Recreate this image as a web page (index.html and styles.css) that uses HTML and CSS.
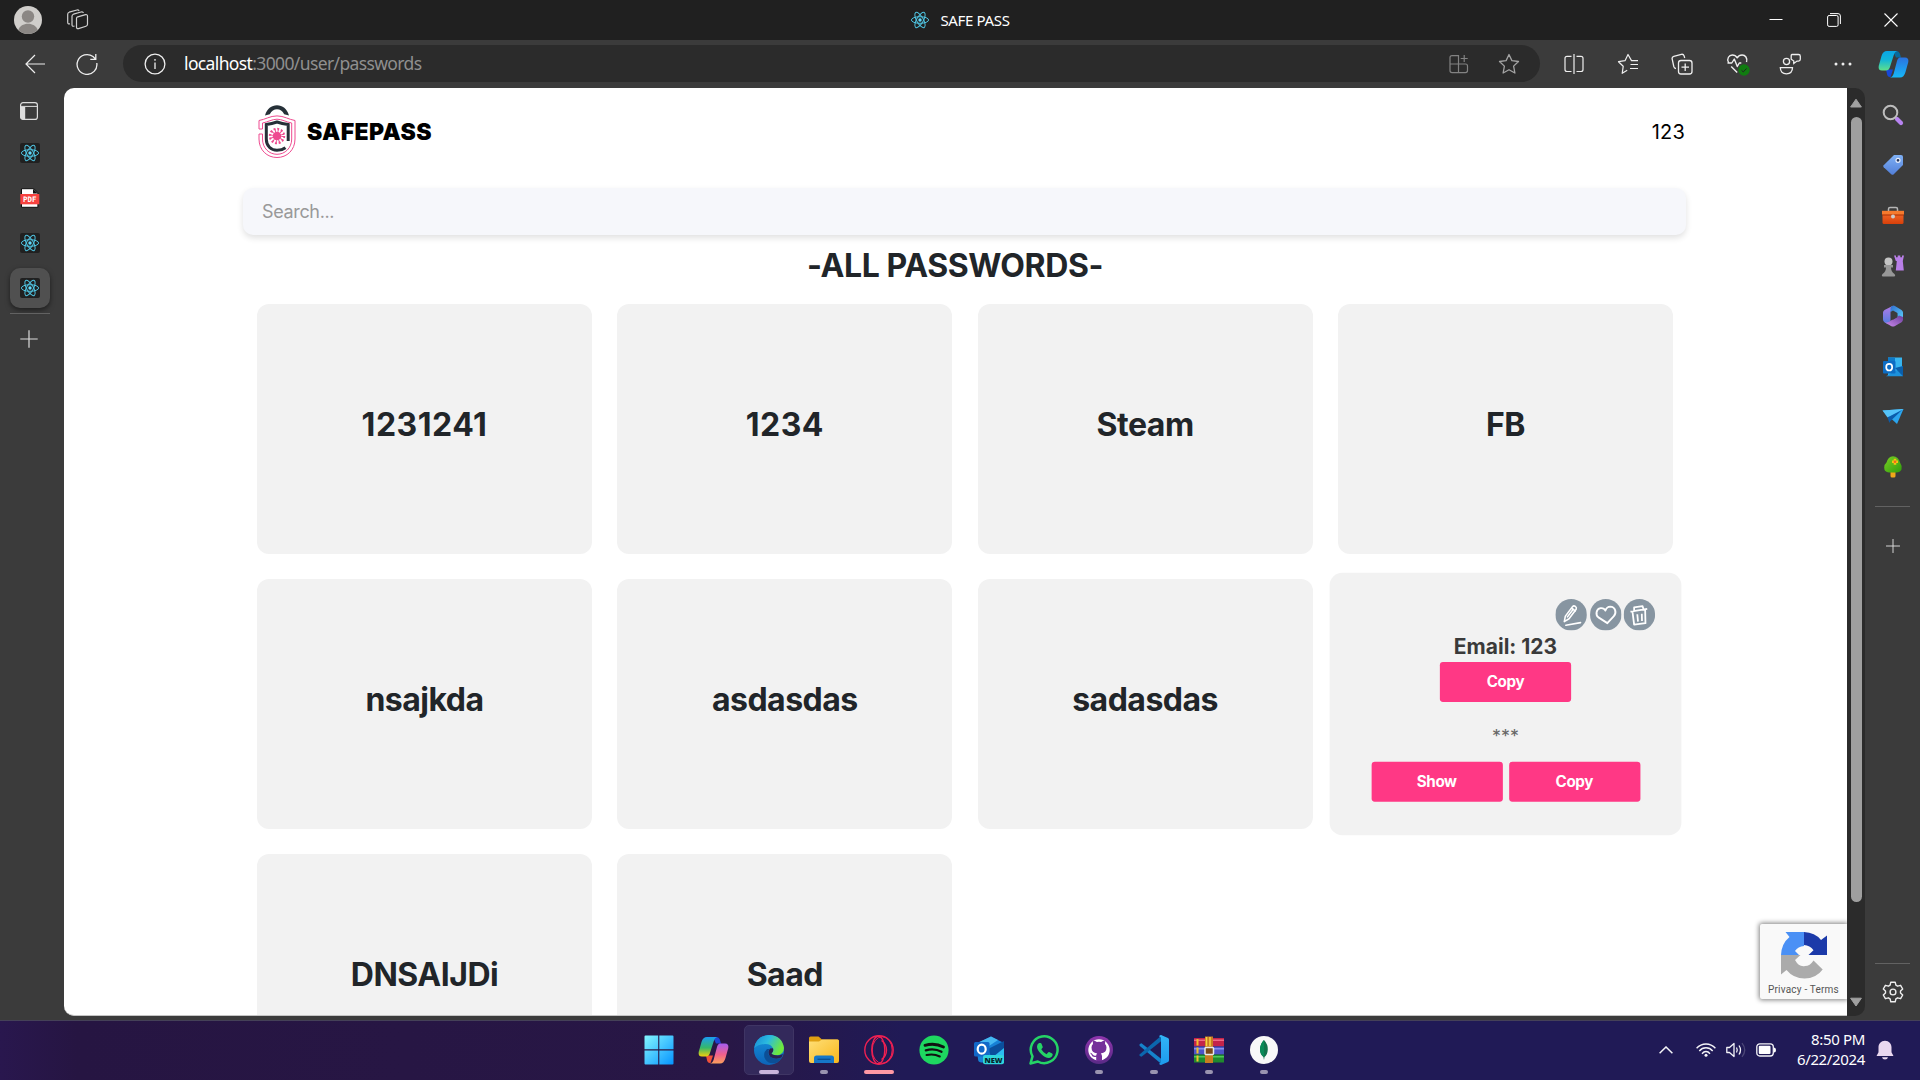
FILE: index.html
```html
<!DOCTYPE html>
<html lang="en">
<head>
<meta charset="utf-8">
<title>SAFE PASS</title>
<link rel="stylesheet" href="styles.css">
</head>
<body>
<svg class="defs" width="0" height="0" aria-hidden="true">
  <defs>
    <linearGradient id="g-win" x1="0" y1="0" x2="1" y2="1"><stop offset="0" stop-color="#84f6ff"/><stop offset="1" stop-color="#0594ff"/></linearGradient>
    <linearGradient id="g-cyan" x1="0" y1="0" x2="0" y2="1"><stop offset="0" stop-color="#0aa5e6"/><stop offset=".45" stop-color="#12b5d8"/><stop offset="1" stop-color="#5fe08a"/></linearGradient>
    <linearGradient id="g-blue" x1="0" y1="0" x2="0" y2="1"><stop offset="0" stop-color="#2b72e0"/><stop offset="1" stop-color="#16b8f8"/></linearGradient>
    <linearGradient id="g-rain" x1="0" y1="0" x2="0" y2="1"><stop offset="0" stop-color="#1b9cf2"/><stop offset=".55" stop-color="#35b86a"/><stop offset="1" stop-color="#f2d00c"/></linearGradient>
    <linearGradient id="g-pink" x1="0" y1="0" x2="0" y2="1"><stop offset="0" stop-color="#a45cf0"/><stop offset=".55" stop-color="#f0608c"/><stop offset="1" stop-color="#fba05c"/></linearGradient>
    <linearGradient id="g-edge" x1="0" y1="0" x2="1" y2=".4"><stop offset="0" stop-color="#1787d4"/><stop offset=".5" stop-color="#2bbbe0"/><stop offset="1" stop-color="#6fe83c"/></linearGradient>
    <linearGradient id="g-edge2" x1="0" y1="0" x2="0" y2="1"><stop offset="0" stop-color="#1594dc"/><stop offset="1" stop-color="#0d63b8"/></linearGradient>
    <linearGradient id="g-fold" x1="0" y1="0" x2="1" y2="1"><stop offset="0" stop-color="#ffdf77"/><stop offset="1" stop-color="#f8b71c"/></linearGradient>
    <linearGradient id="g-tag" x1="0" y1="0" x2="0" y2="1"><stop offset="0" stop-color="#7fb0f5"/><stop offset="1" stop-color="#527fd8"/></linearGradient>
    <linearGradient id="g-tree" x1="0" y1="0" x2="1" y2="1"><stop offset="0" stop-color="#7ad024"/><stop offset="1" stop-color="#2f9c0c"/></linearGradient>
    <linearGradient id="g-code" x1="0" y1="0" x2="0" y2="1"><stop offset="0" stop-color="#32b4f5"/><stop offset="1" stop-color="#1d9bee"/></linearGradient>
    <linearGradient id="g-box" x1="0" y1="0" x2="0" y2="1"><stop offset="0" stop-color="#f57030"/><stop offset="1" stop-color="#d8400a"/></linearGradient>
    <linearGradient id="g-git" x1="0" y1="0" x2="0" y2="1"><stop offset="0" stop-color="#8f35ad"/><stop offset="1" stop-color="#5a2a86"/></linearGradient>
    <linearGradient id="g-hex1" x1="0" y1="0" x2="0" y2="1"><stop offset="0" stop-color="#b57be8"/><stop offset="1" stop-color="#4f7de0"/></linearGradient>
    <linearGradient id="g-hex2" x1="0" y1="0" x2="1" y2="1"><stop offset="0" stop-color="#2f6fd0"/><stop offset="1" stop-color="#5cd0fa"/></linearGradient>
    <linearGradient id="g-hex3" x1="1" y1="0" x2="0" y2="1"><stop offset="0" stop-color="#6a3d9c"/><stop offset="1" stop-color="#cf8df0"/></linearGradient>
  </defs>
  <symbol id="react" viewBox="0 0 20 20">
    <g fill="none" stroke="#4fc3e0" stroke-width="1"><ellipse cx="10" cy="10" rx="8.6" ry="3.3"/><ellipse cx="10" cy="10" rx="8.6" ry="3.3" transform="rotate(60 10 10)"/><ellipse cx="10" cy="10" rx="8.6" ry="3.3" transform="rotate(120 10 10)"/></g><circle cx="10" cy="10" r="1.7" fill="#61dafb"/>
  </symbol>
  <symbol id="plus" viewBox="0 0 20 20"><path d="M10 1.3v17.4M1.3 10h17.4" stroke="#dcdcdc" stroke-width="1.2"/></symbol>
</svg>

<header class="titlebar">
  <div class="title-left">
    <svg width="28" height="28" viewBox="0 0 28 28"><circle cx="14" cy="14" r="14" fill="#d0cecb"/><circle cx="14" cy="10.500" r="6.200" fill="#8b8784"/><path d="M4.300 24c1.500-4.200 5.200-6.300 9.700-6.300s8.200 2.100 9.700 6.300A14 14 0 0 1 14 28a14 14 0 0 1-9.700-4z" fill="#8b8784"/></svg>
    <svg width="22" height="22" viewBox="0 0 22 22" fill="none" stroke="#cfcfcf" stroke-width="1.200" stroke-linejoin="round"><path d="M10 8.200l8.500-2.500q2-.4 2 1.500v8q0 1.500-1.500 2L11.500 19.600q-2 .5-2-1.500V9.500q0-1 .5-1.300z"/><path d="M7.500 17Q5 17.800 5 16V7.200q0-1.500 1.500-2L14 3q2-.5 2.300 1"/><path d="M3 14.800q-2.300.7-2.300-1.500V5.200q0-1.500 1.500-2L10 1q1.700-.4 2 1"/></svg>
  </div>
  <div class="title-mid"><svg width="20" height="20"><use href="#react"/></svg><span>SAFE PASS</span></div>
  <div class="win-btns">
    <span><svg width="14" height="14" viewBox="0 0 14 14"><path d="M.5 6.500h13" stroke="#fff"/></svg></span>
    <span><svg width="14" height="14" viewBox="0 0 14 14" fill="none" stroke="#fff"><rect x=".6" y="2.500" width="10.500" height="10.900" rx="1.500"/><path d="M3 .6h8q2.400 0 2.400 2.400v8"/></svg></span>
    <span><svg width="14" height="14" viewBox="0 0 14 14"><path d="M.5.5l13 13M13.500.5l-13 13" stroke="#fff" stroke-width="1.100"/></svg></span>
  </div>
</header>

<nav class="toolbar">
  <span class="nav-btn back"><svg width="20" height="20" viewBox="0 0 20 20" fill="none" stroke="#eee" stroke-width="1.200"><path d="M20 10H.8M10 1L1 10l9 9"/></svg></span>
  <span class="nav-btn reload"><svg width="22" height="22" viewBox="0 0 22 22" fill="none" stroke="#eee" stroke-width="1.300"><path d="M20.800 10A9.900 9.900 0 1 1 17 3.600L19.500 6M19.800 1v5.400h-5.500"/></svg></span>
  <div class="address">
    <svg class="info" width="22" height="22" viewBox="0 0 22 22" fill="none" stroke="#eee" stroke-width="1.300"><circle cx="11" cy="11" r="9.900"/><path d="M11 9.500v6.500M11 6v1.700"/></svg>
    <span class="url"><b>localhost</b>:3000/user/passwords</span>
    <svg width="20" height="20" viewBox="0 0 20 20" fill="none" stroke="#828282" stroke-width="1.200"><path d="M9.500 18.700V1.600H3Q1 1.600 1 3.600v13q0 2 2 2h13.500q2 0 2-2V12q0-2-2-2H1M15.200 1v7M11.700 4.500h7"/></svg>
    <svg class="star" width="22" height="22" viewBox="0 0 22 22" fill="none" stroke="#a4a4a4" stroke-width="1.300" stroke-linejoin="round"><path d="M11 1.500l2.900 6.100 6.600.9-4.900 4.600 1.300 6.900-5.900-3.300-5.900 3.300 1.300-6.900L1.500 8.500l6.600-.9z"/></svg>
  </div>
  <div class="tools">
    <span><svg width="20" height="20" viewBox="0 0 20 20" fill="none" stroke="#eee" stroke-width="1.200"><path d="M10 0v20M7.500 2.300H3Q1 2.300 1 4.300v11.200q0 2 2 2h4.500M12.500 2.300H17q2 0 2 2v11.200q0 2-2 2h-4.500"/></svg></span>
    <span><svg width="22" height="22" viewBox="0 0 22 22" fill="none" stroke="#eee" stroke-width="1.200" stroke-linejoin="round"><path d="M21 7.600h-6.500L11 1.500 8 7.700l-6.500 1 4.700 4.600-1 7 5-3M13.500 11.500H21M13 15.500h8"/></svg></span>
    <span><svg width="22" height="22" viewBox="0 0 22 22" fill="none" stroke="#eee" stroke-width="1.300"><rect x="7.500" y="7.500" width="13.500" height="13.500" rx="2.500"/><path d="M14.200 10.500v7.500M10.500 14.200H18M5 15.500q-1.700 0-2.200-2L1.200 6.200Q.7 4 2.800 3.300l7.500-2q2.200-.4 2.800 1.600l.6 2.100"/></svg></span>
    <span class="health"><svg width="24" height="24" viewBox="0 0 24 24" fill="none" stroke="#eee" stroke-width="1.400" stroke-linejoin="round"><path d="M2.500 10.500C.5 6.500 3 3 6.300 3c2.500 0 4 1.400 4.900 2.800C12.100 4.400 13.600 3 16.100 3c3.300 0 5.500 3 4.400 7M1.500 11h4.300l2.500-4 3 7.500 2-3.500h2M5.200 14.500l6 6"/><circle cx="18" cy="18" r="5.700" fill="#107c10" stroke="none"/><path d="M15.500 18.300l1.800 1.600 3.200-3.400" stroke="#222" stroke-width="1"/></svg></span>
    <span><svg width="22" height="22" viewBox="0 0 22 22" fill="none" stroke="#eee" stroke-width="1.300"><circle cx="7.500" cy="8.500" r="3.100"/><path d="M1.300 14.600H13.500c0 4-2.300 6.200-6.100 6.200s-6.100-2.200-6.100-6.200zM13 1.500h6.500q1.800 0 1.800 1.800v3q0 1.800-1.800 1.800h-1.500L14.800 10.500V8l-2.600-1.800V3q0-1.500.8-1.500z"/></svg></span>
    <span class="more"><svg width="18" height="4" viewBox="0 0 18 4" fill="#eee"><circle cx="2" cy="2" r="1.500"/><circle cx="9" cy="2" r="1.500"/><circle cx="16" cy="2" r="1.500"/></svg></span>
    <span class="copilot"><svg width="31" height="28" viewBox="0 0 31 28"><path d="M15 1h3.500q2.500 0 3.400 2.700L23 7.500h-5z" fill="#076a9c"/><path d="M8 19.500h7L12.500 27q-2.500.4-3.300-2z" fill="#1648d8"/><path d="M9 1h11q-3 0-4.200 4l-4 12.500q-1 3-3.800 3H4Q0 20.500.7 16L3.500 6Q5 1 9 1z" fill="url(#g-cyan)"/><path d="M22 7.500h5q4 0 3.300 4.500l-2.800 10Q26 27.500 22 27.500H11.500q3-.2 4.200-4L19 11q1-3.500 3-3.500z" fill="url(#g-blue)"/></svg></span>
  </div>
</nav>

<div class="workspace">
  <aside class="tabs">
    <span class="tab tab-menu"><svg width="18" height="18" viewBox="0 0 18 18"><rect x=".6" y=".6" width="16.800" height="16.800" rx="2.500" fill="none" stroke="#ddd" stroke-width="1.200"/><path d="M.5 5h4.700v12.500H2.500Q.5 17.500.5 15.500z" fill="#ddd"/><path d="M1 4.400h16" stroke="#ddd"/></svg></span>
    <span class="tab"><i class="fav"><svg width="20" height="20"><use href="#react"/></svg></i></span>
    <span class="tab"><svg class="pdf" width="20" height="20" viewBox="0 0 20 20"><path d="M1.500.7h12.300l4.100 4v14.600H1.500z" fill="#fff" stroke="#111"/><path d="M13 .7v4.800h5z" fill="#111"/><rect x=".3" y="6" width="19" height="10.300" fill="#f8423f"/><text x="9.800" y="13.900" text-anchor="middle" class="pdf-text">PDF</text></svg></span>
    <span class="tab"><i class="fav"><svg width="20" height="20"><use href="#react"/></svg></i></span>
    <span class="tab active"><i class="fav"><svg width="20" height="20"><use href="#react"/></svg></i></span>
    <hr>
    <svg class="add" width="20" height="20"><use href="#plus"/></svg>
  </aside>

  <main class="page">
    <div class="content">
      <header class="site-head">
        <div class="brand">
          <svg width="38" height="54" viewBox="0 0 38 54" fill="none"><path d="M7 10.500C9 3.500 13.500.2 19 .2S29 3.500 31 10.500L26.200 9.200C24.500 6 22 4.300 19 4.300S13.500 6 11.800 9.200z" fill="#263038"/><g stroke="#ee4b90" stroke-width="1"><path d="M1 24V15.500C7 14.600 12 10.900 19 10.900S31 14.600 37 15.500V34C37 45 29 52.500 19 52.500S1 45 1 34V29H4.500V34C4.500 43 11 49.300 19 49.300S33.700 43 33.700 34V18C28 17 24 14.200 19 14.200S10 17 4.500 18V24z"/></g><path d="M30.200 36V19.500Q24 18.700 19 17Q14 18.700 8.300 19.500V34C8.300 41 13 45.300 19 45.300Q24 45.300 27.500 42.700" stroke="#263038" stroke-width="3"/><g stroke="#ee4b90"><circle cx="19" cy="31" r="4.300" fill="#ee4b90" stroke="none"/><circle cx="19" cy="31" r="5.800" stroke-width="3.200" stroke-dasharray="1.100 1.937"/><circle cx="19" cy="31" r="7.300" stroke-width="1.800" stroke-dasharray="2 1.822"/></g></svg>
          <span>SAFEPASS</span>
        </div>
        <span class="user">123</span>
      </header>
      <div class="search">Search...</div>
      <h2>-ALL PASSWORDS-</h2>
      <section class="grid">
        <article class="card numeric">1231241</article>
        <article class="card numeric">1234</article>
        <article class="card">Steam</article>
        <article class="card">FB</article>
        <article class="card">nsajkda</article>
        <article class="card">asdasdas</article>
        <article class="card">sadasdas</article>
        <article class="card open">
          <div class="actions">
            <svg width="30" height="30" viewBox="0 0 30 30" fill="none" stroke="#fff" stroke-width="1.500" stroke-linejoin="round"><circle cx="15" cy="15" r="15" fill="#8795a1" stroke="none"/><path d="M8.500 21.500l1-5.200 6.800-9q1.200-1.300 2.700-.2t.8 2.700l-6.800 9zM16 9l3 2.500M11.500 17l5.500-7.300M10 25l14-2.500" stroke-linecap="round"/></svg>
            <svg width="30" height="30" viewBox="0 0 30 30" fill="none" stroke="#fff" stroke-width="1.800" stroke-linejoin="round"><circle cx="15" cy="15" r="15" fill="#8795a1" stroke="none"/><path d="M16.500 23L8 17.500C5 15 5.700 9.500 10 8.700q3.300-.4 4.700 2.300Q16 7.300 19.200 7.300c5.300.2 6.200 6.200 3.500 9z"/></svg>
            <svg width="30" height="30" viewBox="0 0 30 30" fill="none" stroke="#fff" stroke-width="1.700" stroke-linejoin="round"><circle cx="15" cy="15" r="15" fill="#8795a1" stroke="none"/><path d="M6.500 12L22.500 9.500M10 11.300V8L18 6.700 19 10M8.500 12.500l1.500 12L20.800 23 20.500 10.500M13 14.500l.7 7M17.300 14l.2 7"/></svg>
          </div>
          <h3>Email: 123</h3>
          <button class="pink">Copy</button>
          <p>***</p>
          <div class="pair"><button class="pink">Show</button><button class="pink">Copy</button></div>
        </article>
        <article class="card">DNSAIJDi</article>
        <article class="card">Saad</article>
      </section>
    </div>
    <div class="captcha">
      <svg width="48" height="48" viewBox="0 0 48 48"><path d="M24 1v14q-6 .5-9 5l4 4H1Q1.500 12.500 9.500 6L5.500 1z" fill="#4a90f5"/><path d="M24 1q11 .4 17 8l6-4.500V24H28.500l5-4.800Q30 14.500 24 14z" fill="#1c3aa9"/><path d="M1 24h19.500l-5.500 5q4 7.300 10 6 5 0 8.500-5.500l9.200 9Q36 47.500 24.500 47.500 13.500 47.500 6.500 39L1 43.500z" fill="#ababab"/></svg>
      <span>Privacy - Terms</span>
    </div>
  </main>
  <div class="scroll">
    <svg width="14" height="10" viewBox="0 0 14 10"><path d="M7 1.200L12.400 9H1.600z" fill="#a0a0a0" stroke="#a0a0a0" stroke-linejoin="round"/></svg>
    <div class="thumb"></div>
    <svg width="14" height="10" viewBox="0 0 14 10"><path d="M7 9L12.400 1.200H1.600z" fill="#a0a0a0" stroke="#a0a0a0" stroke-linejoin="round"/></svg>
  </div>

  <aside class="apps">
    <span><svg width="22" height="22" viewBox="0 0 22 22"><path d="M15 15l4 4" stroke="#b884f2" stroke-width="4.200" stroke-linecap="round"/><circle cx="8.500" cy="8.500" r="6.800" fill="none" stroke="#bdbdbd" stroke-width="2"/></svg></span>
    <span><svg width="22" height="22" viewBox="0 0 22 22"><path d="M12 1h7q2 0 2 2v8L11.500 20.400q-1 .8-2 0l-7.800-7.200q-1-1 0-2z" fill="url(#g-tag)"/><circle cx="16" cy="6.300" r="2" fill="#25365c" stroke="#e8eefc" stroke-width="1.200"/></svg></span>
    <span><svg width="24" height="20" viewBox="0 0 24 20"><path d="M7.500 5V3q0-1.500 1.500-1.500h6q1.500 0 1.500 1.500v2" fill="none" stroke="#b5b5b5" stroke-width="1.500"/><rect x="1.500" y="5" width="21" height="13" rx="1.500" fill="url(#g-box)"/><path d="M1 4.800h22v4H1z" fill="#f57a2e"/><path d="M1 9h22" stroke="#aa3004"/><circle cx="12" cy="10.500" r="2" fill="#ccc"/></svg></span>
    <span><svg width="24" height="24" viewBox="0 0 24 24"><path d="M13 1.500h2v1.700h1.700V1.500h2.600v1.700H21V1.500h2L21.800 7l1 9.500h-8l1-9.500h-1z" fill="#b97fe8"/><circle cx="7.500" cy="7.500" r="4" fill="#c4c4c4"/><path d="M3 11h9v2.500h-2q0 4 3.500 6.500 1.500 2.500-.5 2.500H2Q0 22.500 1.500 20 5 17.500 5 13.500H3z" fill="#979797"/></svg></span>
    <span><svg width="22" height="24" viewBox="0 0 22 24"><path d="M11.500 1.500L2.500 6Q1 7 1 8.500v7q0 1.800 1.500 2.700L6 20.300l2.500-3.500V8z" fill="url(#g-hex1)"/><path d="M8.500 8V4.500Q8.800 1 12.500 1.800L19.500 6Q21 7 21 8.500v7L15.500 13V9L11 6.500z" fill="url(#g-hex2)"/><path d="M21 13v2.500q0 1.800-1.500 2.700L13 22q-2 1-4 0l-6.500-3.800q3.500 1 6-1.400l7-4L17 11.500z" fill="url(#g-hex3)"/><path d="M11.500 8.300l3.700 2.200v2.800L11 15.700l-2-1.200V9.800z" fill="#3b3b3b"/></svg></span>
    <span><svg width="22" height="22" viewBox="0 0 22 22"><path d="M6 1.500h14v18H6z" fill="#36b5f0"/><path d="M6 1.500h7v6H6z" fill="#0e79c8"/><path d="M21 10v10.300H4L15 14z" fill="#1c91dc"/><path d="M13 12l8 8.300V10z" fill="#0a5eaa"/><rect x="1" y="5" width="12.500" height="12.500" rx="1" fill="#0d6dc4"/><ellipse cx="7.200" cy="11.200" rx="3" ry="3.300" fill="none" stroke="#fff" stroke-width="1.700"/></svg></span>
    <span><svg width="22" height="18" viewBox="0 0 22 18"><path d="M.5 2.500L21.500 1 15 16z" fill="#2ba5ee"/><path d="M.5 2.500L21.500 1 5.500 9.500z" fill="#55c4fa"/><path d="M5.500 9.500L20 2 8 13.500 7.500 15z" fill="#0c5cab"/></svg></span>
    <span><svg width="20" height="24" viewBox="0 0 20 24"><path d="M7.500 16h5v5q0 1.500-1.500 1.500H9q-1.500 0-1.500-1.500z" fill="#f0a81a"/><path d="M10 1.200q5.500.5 7 6.300 2.500 3.500 1.500 7Q17 18 12 17.500H6Q1.200 17.200 1.200 12.500q.3-3.500 2.300-5Q5 1.500 10 1.200z" fill="url(#g-tree)"/><path d="M12 3.700v6M9 6.700h6" stroke="#f5c211" stroke-width="2.600"/><circle cx="12" cy="6.700" r="1.300" fill="#f0641e"/></svg></span>
    <hr>
    <svg class="app-add" width="16" height="16"><use href="#plus"/></svg>
    <hr class="low">
    <svg class="gear" width="22" height="22" viewBox="0 0 22 22" fill="none" stroke="#eee" stroke-width="1.400" stroke-linejoin="round"><circle cx="11" cy="11" r="2.900"/><path d="M8.800 1.200h4.400l.7 3 1.700 1 3-.9 2.100 3.700-2.200 2.100v1.800l2.200 2.100-2.100 3.700-3-.9-1.700 1-.7 3H8.800l-.7-3-1.700-1-3 .9L1.300 14l2.200-2.100v-1.800L1.300 8l2.100-3.700 3 .9 1.700-1z"/></svg>
  </aside>
</div>

<footer class="taskbar">
  <div class="dock">
    <span><svg width="30" height="30" viewBox="0 0 30 30"><path d="M1.500.5h12.700v13.700H.5V1.500q0-1 1-1zM15.300.5h13.200q1 0 1 1v12.700H15.300zM.5 15.600h13.700v13.900H1.500q-1 0-1-1zM15.300 15.600h14.200v12.900q0 1-1 1H15.300z" fill="url(#g-win)"/></svg></span>
    <span><svg width="31" height="28" viewBox="0 0 31 28"><path d="M15 1h3.500q2.500 0 3.400 2.700L23 7.500h-5z" fill="#1d46d4"/><path d="M8 19.500h7L12.500 27q-2.500.4-3.300-2z" fill="#f0503a"/><path d="M9 1h11q-3 0-4.200 4l-4 12.500q-1 3-3.800 3H4Q0 20.500.7 16L3.500 6Q5 1 9 1z" fill="url(#g-rain)"/><path d="M22 7.500h5q4 0 3.300 4.500l-2.800 10Q26 27.500 22 27.500H11.500q3-.2 4.200-4L19 11q1-3.500 3-3.500z" fill="url(#g-pink)"/></svg></span>
    <span class="current"><svg width="30" height="30" viewBox="0 0 30 30"><circle cx="15" cy="15" r="15" fill="url(#g-edge2)"/><path d="M13 14q-5 5-1.500 10.500Q15 29.500 22 28q4-2 5.500-5.500-6 3-11-.5-4.500-4-1-8z" fill="#0c4f96"/><path d="M.3 13Q2 1.500 14 0q14-.3 16 13-.2 7-7.500 7.300-5 .2-5-2 2.500-2 1.500-5-2-4.500-8-4.300Q4 9.500.3 13z" fill="url(#g-edge)"/><path d="M17.500 18.300q2.500-2 1.500-5l-3 .3q-3.300 4.400.5 8.400 5 3 11 .5l1.500-3.500q-3 1.800-7 1.300-4-.3-4.500-2z" fill="#2a2150"/></svg><i class="bar mauve"></i></span>
    <span><svg width="30" height="28" viewBox="0 0 30 28"><path d="M0 2q0-1.500 1.500-1.500h8L13 3.500h15.500Q30 3.500 30 5v6H0z" fill="#e0a012"/><path d="M0 5.500h10L13 3.500h15.500Q30 3.500 30 5v20q0 2-2 2H2q-2 0-2-2z" fill="url(#g-fold)"/><path d="M5 27v-5q0-2.500 2.500-2.500h15q2.500 0 2.500 2.500v5z" fill="#1677c8"/><path d="M8.500 23.300h13" stroke="#0b4f91" stroke-width="1.300"/></svg><i class="bar dot"></i></span>
    <span><svg width="30" height="30" viewBox="0 0 30 30" fill="none" stroke="#f02052" stroke-width="1.400"><circle cx="15" cy="15" r="14.200"/><ellipse cx="14.300" cy="15" rx="6.500" ry="13.800"/><path d="M17.500 5.500q5 3.500 5 9.500t-5 9.500"/><ellipse cx="18.200" cy="15" rx="10" ry="13.300" stroke-width="1"/></svg><i class="bar rose"></i></span>
    <span><svg width="30" height="30" viewBox="0 0 30 30" fill="none" stroke="#111" stroke-linecap="round"><circle cx="15" cy="15" r="14.600" fill="#1ed760" stroke="none"/><path d="M6 10.300q10-2.800 18.500 1.700" stroke-width="2.800"/><path d="M6.800 15.300q8.700-2.300 15.700 1.500" stroke-width="2.300"/><path d="M7.500 20q7.300-1.700 13.300 1.500" stroke-width="2"/></svg></span>
    <span><svg width="30" height="30" viewBox="0 0 30 30"><path d="M2 9L17 1.500 30 8v18q0 1.500-1.500 1.500H7Q4 27 4 24z" fill="#1681d6"/><path d="M3 8L17 1.500l7 3.500-12 8z" fill="#45b8f2"/><path d="M14 14L30 6v10L18 24z" fill="#0a4f9c"/><path d="M30 13v13H14z" fill="#2cbdf0"/><rect x="0" y="7" width="15.500" height="14.500" rx="1.500" fill="#1268c8"/><ellipse cx="7.700" cy="14.200" rx="4" ry="4.500" fill="none" stroke="#fff" stroke-width="2.200"/><rect x="9" y="20" width="21" height="9.300" rx="2" fill="#2fd5dc"/><text x="19.500" y="27.500" text-anchor="middle" class="new-text">NEW</text></svg></span>
    <span><svg width="30" height="30" viewBox="0 0 30 30"><path d="M1.500 28.500l2-7.200A13.400 13.400 0 1 1 8.800 26.500z" fill="none" stroke="#25d366" stroke-width="2.500" stroke-linejoin="round"/><path d="M10 8h1.500q.7 0 1 .8l1.200 3q.2.6-.2 1l-1.200 1.500q2 3.600 5.200 4.900l1.600-1.800q.5-.5 1-.3l3 1.500q.7.400.6 1-.3 3-3.500 3.400-4 .2-8-4-4.300-4.300-4.200-7.500Q8 9 10 8z" fill="#25d366"/></svg></span>
    <span><svg width="30" height="30" viewBox="0 0 30 30"><circle cx="15" cy="15" r="14" fill="url(#g-git)"/><circle cx="15" cy="15" r="10.700" fill="#fff"/><path d="M12.200 26v-4.200q-3.800.8-4.700-2-.7-1.300-1.800-2 2-.2 3.200 2 1.300 1.500 3.300.8.200-1.300 1-2-5.700-.7-5.700-6 0-2.200 1.500-3.600-.5-1.700.3-3.500 1.800 0 3.600 1.500 2.100-.6 4.200 0 1.800-1.500 3.600-1.500.8 1.800.3 3.500 1.500 1.400 1.500 3.600 0 5.300-5.700 6 1.200 1 1.200 2.700V26z" fill="#74309a"/></svg><i class="bar dot"></i></span>
    <span><svg width="30" height="30" viewBox="0 0 30 30"><path d="M2.500 8.300L23 24.500v5L.8 11q-.8-1 0-1.900z" fill="#1583cc"/><path d="M2.500 21.700L23 5.500V0L.8 19.200q-.8 1 0 1.800z" fill="#0b66ad"/><path d="M22 0l7 3q1 .5 1 1.700v20.600q0 1.200-1 1.700l-7 3q-1 0-2-1.200l2-1.300v-25L20 1.200Q21 0 22 0z" fill="url(#g-code)"/></svg><i class="bar dot"></i></span>
    <span><svg width="30" height="28" viewBox="0 0 30 28"><rect y="2" width="30" height="8.300" fill="#c4244a"/><rect y="3.500" width="30" height="1.500" fill="#ef6a86"/><rect y="10.500" width="30" height="8" fill="#4c54c8"/><rect y="12" width="30" height="1.500" fill="#8690ee"/><rect y="18.500" width="30" height="8" fill="#1f8a2e"/><rect y="20" width="30" height="1.500" fill="#4fc85a"/><path d="M3.500 3v6.500M3.500 11.500v6M3.500 19.500v6" stroke="#f0c02c" stroke-width="2"/><rect x="11" y=".5" width="8" height="26.500" fill="#c97c22"/><path d="M12.500 1v9M16 1v9" stroke="#f4d442" stroke-width="1.500"/><rect x="11" y="11.500" width="8.500" height="7" rx="1" fill="#7a4818" stroke="#e8e8e8" stroke-width="1.500"/></svg><i class="bar dot"></i></span>
    <span><svg width="30" height="30" viewBox="0 0 30 30"><circle cx="15" cy="15" r="14" fill="#f8f8f8"/><path d="M15 5q4 4.300 3.800 9.500Q18.500 20 15.500 22L15 25l-.6-3Q11 19.500 11 14.500 11 9 15 5z" fill="#12734b"/><path d="M15 5v17q-3.800-3-4-7.500Q11 9 15 5z" fill="#0a8a58"/></svg><i class="bar dot"></i></span>
  </div>
  <div class="tray">
    <svg class="chev" width="14" height="8" viewBox="0 0 14 8" fill="none" stroke="#f4f4f8" stroke-width="1.500"><path d="M.6 7.300L7 1l6.400 6.300"/></svg>
    <svg class="wifi" width="20" height="16" viewBox="0 0 20 16" fill="none" stroke="#f4f4f8" stroke-width="1.400"><path d="M.6 6.300Q4.500 2 10 2t9.400 4.300M3.300 9Q6 5.800 10 5.800T16.700 9M6 11.700Q7.800 9.500 10 9.500t4 2.200"/><circle cx="10" cy="13.300" r="1.500" fill="#f4f4f8" stroke="none"/></svg>
    <svg class="vol" width="20" height="16" viewBox="0 0 20 16" fill="none" stroke="#f4f4f8" stroke-width="1.300" stroke-linejoin="round"><path d="M.8 5.500h2.700L8 1.500v13l-4.500-4H.8zM10.500 5.500q1.500 2.500 0 5M13 3.500q3 4.500 0 9"/><path d="M16 1.200q5.500 6.800 0 13.600" stroke="#4c4777"/></svg>
    <svg class="batt" width="20" height="14" viewBox="0 0 20 14"><rect x=".8" y=".8" width="16.500" height="12.200" rx="3" fill="none" stroke="#f4f4f8" stroke-width="1.300"/><rect x="2.800" y="2.800" width="11.700" height="8.200" rx="1" fill="#fff"/><path d="M18 4.500q2 0 2 2.500t-2 2.500z" fill="#fff"/></svg>
    <div class="clock"><span>8:50 PM</span><span>6/22/2024</span></div>
    <svg class="bell" width="18" height="20" viewBox="0 0 18 20"><path d="M9 .8c4 0 6.500 3 6.500 6.500v5L17.500 16H.5l2-3.700v-5C2.500 3.800 5 .8 9 .8z" fill="#ead8f0"/><path d="M6 17.200h6Q11.500 19.500 9 19.500T6 17.200z" fill="#ead8f0"/></svg>
  </div>
</footer>
</body>
</html>
```
FILE: styles.css
```css
* { box-sizing: border-box; }
body {
  margin: 0;
  width: 1920px;
  height: 1080px;
  overflow: hidden;
  display: flex;
  flex-direction: column;
  background: #3b3b3b;
  font-family: Inter, "Liberation Sans", sans-serif;
}
svg { display: block; flex: none; }
.defs { position: absolute; }
hr { border: 0; margin: 0; height: 1px; background: #626262; flex: none; }

.titlebar {
  height: 40px;
  flex: none;
  background: #202020;
  display: grid;
  grid-template-columns: 1fr auto 1fr;
  align-items: center;
}
.title-left { display: flex; align-items: center; gap: 25px; padding-left: 14px; }
.title-mid {
  display: flex;
  align-items: center;
  gap: 10px;
  color: #fff;
  font: 15px "Noto Sans", sans-serif;
  letter-spacing: -.35px;
}
.win-btns { display: flex; justify-content: flex-end; }
.win-btns span { width: 57.5px; height: 40px; display: grid; place-items: center; }

.toolbar { height: 48px; flex: none; display: flex; align-items: center; padding-bottom: 1px; }
.nav-btn { display: grid; place-items: center; width: 52px; }
.back { margin-left: 9px; }
.address {
  margin-left: 10px;
  width: 1417px;
  height: 37px;
  border-radius: 19px;
  background: #2b2b2b;
  display: flex;
  align-items: center;
  padding: 0 20px 0 21px;
}
.url { flex: 1; margin-left: 18px; padding-bottom: 2px; color: #8f8f8f; font: 17.500px/24px "Noto Sans", sans-serif; letter-spacing: -.63px; }
.url b { color: #fff; font-weight: 400; }
.star { margin-left: 29px; }
.tools { display: flex; align-items: center; margin-left: 7px; }
.tools span { width: 54px; display: grid; place-items: center; }
.tools .health { padding-left: 3px; }
.tools .more { padding-right: 3px; }
.tools .copilot { width: 45px; }

.workspace { height: 932px; flex: none; display: flex; align-items: flex-start; }
.tabs { width: 64px; display: flex; flex-direction: column; align-items: flex-start; }
.tab { width: 40px; height: 40px; margin: 0 0 5px 10px; display: grid; place-items: center; border-radius: 10px; }
.tab-menu { height: 45px; margin-bottom: 0; padding-right: 3px; }
.active { background: #505050; box-shadow: 0 2px 5px rgba(0,0,0,.5); }
.fav { background: #202020; border-radius: 2px; width: 20px; height: 20px; }
.pdf-text { font: 800 7.500px "DejaVu Sans Mono", monospace; fill: #fff; }
.tabs hr { width: 40px; margin-left: 10px; }
.add { margin: 15px 0 0 19px; }

.page {
  width: 1783px;
  height: 928px;
  background: #fff;
  border-radius: 10px 0 0 10px;
  border-bottom: 1px solid #c4c4c4;
  overflow: hidden;
  position: relative;
}
.content { width: 1443px; margin-left: 179px; }
.site-head { height: 100px; padding: 17px 1px 0 15px; display: flex; justify-content: space-between; align-items: flex-start; }
.brand { display: flex; gap: 11px; font-size: 23px; font-weight: 900; line-height: 54px; color: #000; letter-spacing: .4px; }
.user { font-size: 20px; line-height: 54px; color: #000; letter-spacing: .2px; }
.search {
  height: 47px;
  background: #f6f7fb;
  border-radius: 10px;
  box-shadow: 0 3px 6px rgba(0,0,0,.12);
  padding-left: 19px;
  font-size: 18px;
  font-weight: 400;
  line-height: 47px;
  letter-spacing: -.35px;
  color: #999;
}
h2 { margin: 12px 19px 0 0; font-size: 32px; line-height: 38px; font-weight: 700; letter-spacing: -.4px; text-align: center; color: #212529; }
.grid { display: grid; grid-template-columns: repeat(4, 335px); column-gap: 25.300px; row-gap: 25px; margin: 19px 0 0 14px; grid-auto-rows: 250px; }
.card {
  background: #f2f2f2;
  border-radius: 12px;
  display: grid;
  place-items: center;
  padding-bottom: 9px;
  font-size: 32px;
  font-weight: 700;
  letter-spacing: -.5px;
  color: #212529;
}
.numeric { letter-spacing: .5px; }
.open { transform: scale(1.05); display: flex; flex-direction: column; align-items: center; padding: 25px 25px 0; letter-spacing: 0; }
.actions { display: flex; gap: 2.500px; align-self: flex-end; }
h3 { margin: 0; font-size: 20px; line-height: 30px; font-weight: 700; letter-spacing: 0; color: #3a3a3a; }
.pink {
  border: 0;
  border-radius: 3px;
  width: 125px;
  height: 38px;
  padding: 0 0 2px;
  background: #ff3885;
  color: #fff;
  font: 700 14.500px Inter, sans-serif;
  letter-spacing: -.4px;
}
.open p { margin: 0; height: 57px; line-height: 64px; font-size: 17px; font-weight: 400; color: #666; }
.pair { display: flex; gap: 6px; }
.captcha {
  position: absolute;
  right: 0;
  top: 836px;
  width: 87px;
  height: 75px;
  border-radius: 2px 0 0 2px;
  background: #f9f9f9;
  box-shadow: 0 0 5px 1px gray;
  display: flex;
  flex-direction: column;
  align-items: center;
  padding-top: 7px;
  color: #555;
  font: 10px Roboto, sans-serif;
}
.captcha span { margin-top: 5px; letter-spacing: .2px; white-space: nowrap; }

.scroll { width: 18px; height: 928px; background: #2b2b2b; border-radius: 0 10px 10px 0; display: flex; flex-direction: column; align-items: center; padding: 10px 0 9px; }
.thumb { width: 11px; height: 785px; margin: 9px 0 auto; border-radius: 6px; background: #9f9f9f; }

.apps { width: 55px; height: 932px; display: flex; flex-direction: column; align-items: center; padding: 2px 0 0; }
.apps span { height: 50.300px; display: grid; place-items: center; }
.apps hr { width: 35px; margin-top: 14px; }
.app-add { margin-top: 31px; }
.apps .low { margin-top: auto; }
.gear { margin: 17px 0 17px; }

.taskbar {
  height: 60px;
  flex: none;
  border-top: 1px solid #454158;
  background: linear-gradient(90deg, #29174e 0, #261542 4%, #281746 38%, #201a56 47%, #201a56 100%);
  display: flex;
  justify-content: space-between;
}
.dock { display: flex; margin-left: 633.500px; padding-top: 4px; }
.dock span { width: 50px; height: 50px; margin-right: 5px; display: grid; place-items: center; border-radius: 5px; position: relative; border: 1px solid transparent; }
.dock .current { background: #33295b; border-color: #3f3564; }
.bar { position: absolute; left: 50%; bottom: 0; height: 4px; border-radius: 2px; transform: translateX(-50%); }
.dot { width: 8px; background: #9a94b0; }
.mauve { width: 20px; background: #cab4dc; }
.rose { width: 30px; background: #ff98a4; }
.new-text { font: 800 7.500px "Open Sans", sans-serif; fill: #06262c; }
.tray { display: flex; align-items: center; padding: 0 26px 2px 0; }
.wifi { margin-left: 23px; }
.vol { margin-left: 10px; }
.batt { margin-left: 10px; }
.clock { width: 89px; display: flex; flex-direction: column; text-align: right; color: #fff; font: 15px/20px "Noto Sans", sans-serif; letter-spacing: -.35px; margin-top: -2px; }
.bell { margin-left: 11px; }
```
